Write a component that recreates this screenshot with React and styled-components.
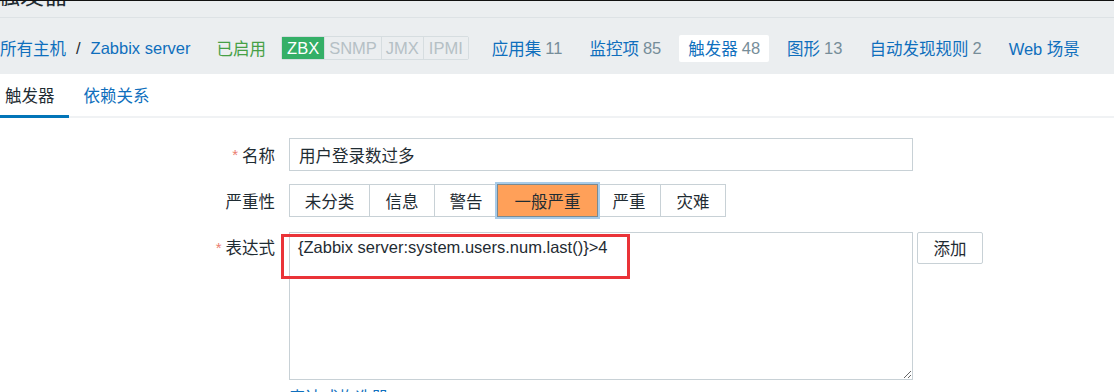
import React from "react";
import styled, { createGlobalStyle } from "styled-components";

const FONT = `"Liberation Sans", Arial, "Noto Sans CJK SC", sans-serif`;

const GlobalStyle = createGlobalStyle`
  html, body { margin: 0; padding: 0; background: #ffffff; }
  body {
    font-family: ${FONT};
    font-size: 16.5px;
    color: #1f2c33;
    overflow: hidden;
  }
`;

const Page = styled.div`
  width: 1114px;
  height: 392px;
  overflow: hidden;
  border-top: 1px solid #111;
  box-sizing: border-box;
`;

const TitleBar = styled.div`
  height: 16px;
  background: #ebeef0;
  overflow: hidden;
  border-bottom: 1px solid #dde2e5;
`;

const Title = styled.h1`
  margin: -17px 0 0 -4px;
  font-size: 24px;
  line-height: 24px;
  font-weight: normal;
  color: #1f2c33;
`;

const NavBar = styled.div`
  box-sizing: border-box;
  height: 56px;
  padding-top: 4px;
  background: #ebeef0;
  display: flex;
  align-items: center;
  white-space: nowrap;
`;

const Crumbs = styled.div`
  display: flex;
  align-items: center;
  color: #1f2c33;
`;

const Link = styled.a`
  color: #0f6fbd;
  text-decoration: none;
`;

const Sep = styled.span`
  margin: 0 10px;
  color: #1f2c33;
`;

const Status = styled.span`
  color: #46a046;
  margin-left: 26px;
`;

const Tags = styled.div`
  display: flex;
  margin-left: 15px;
  border: 1px solid #d6dde0;
  border-radius: 2px;
  height: 22px;
`;

const Tag = styled.span`
  display: flex;
  align-items: center;
  padding: 0 ${(p) => p.$pad || 4}px;
  background: ${(p) => (p.$on ? "#34af67" : "#ebeef0")};
  color: ${(p) => (p.$on ? "#ffffff" : "#b5c0c5")};
  border-left: ${(p) => (p.$first ? "none" : "1px solid #d6dde0")};
`;

const NavItem = styled.a`
  display: flex;
  align-items: center;
  height: 27px;
  padding: 0 9px;
  margin-left: ${(p) => p.$ml || 9}px;
  color: #0f6fbd;
  text-decoration: none;
  background: ${(p) => (p.$active ? "#ffffff" : "transparent")};
  border-radius: 2px;
`;

const Count = styled.span`
  color: #768d99;
  margin-left: 4px;
`;

const TabsBar = styled.div`
  display: flex;
  height: 42px;
  border-bottom: 2px solid #f0f2f4;
`;

const TabList = styled.div`
  display: flex;
  margin-left: -10px;
`;

const Tab = styled.a`
  display: flex;
  align-items: center;
  padding: 0 14px 0 15px;
  margin-bottom: -2px;
  text-decoration: none;
  color: ${(p) => (p.$active ? "#1f2c33" : "#0f6fbd")};
  border-bottom: 3px solid ${(p) => (p.$active ? "#0275b8" : "transparent")};
`;

const Form = styled.div`
  display: grid;
  grid-template-columns: 275px 1fr;
  column-gap: 14px;
  padding-top: 20px;
`;

const Label = styled.div`
  display: flex;
  align-items: center;
  justify-content: flex-end;
  height: ${(p) => p.$h || 33}px;
  margin-bottom: ${(p) => p.$mb || 0}px;
  color: #1f2c33;
`;

const Star = styled.span`
  color: #eb7e70;
  margin-right: 4px;
  font-size: 15px;
`;

const Field = styled.div`
  display: flex;
  align-items: flex-start;
  margin-bottom: ${(p) => p.$mb || 0}px;
`;

const TextInput = styled.div`
  box-sizing: border-box;
  width: 624px;
  height: 33px;
  border: 1px solid #c8d1d6;
  display: flex;
  align-items: center;
  padding: 0 9px;
  color: #1f2c33;
`;

const Segmented = styled.div`
  display: flex;
  height: 33px;
`;

const SegBtn = styled.span`
  box-sizing: border-box;
  display: flex;
  align-items: center;
  justify-content: center;
  width: ${(p) => p.$w}px;
  height: 33px;
  border: 1px solid ${(p) => (p.$on ? "#7a8a92" : "#c8d1d6")};
  margin-left: -1px;
  background: ${(p) => (p.$on ? "#ffa059" : "#ffffff")};
  color: #1f2c33;
  box-shadow: ${(p) => (p.$on ? "0 0 0 2px #a8cbe9" : "none")};
  position: relative;
  z-index: ${(p) => (p.$on ? 1 : 0)};
  &:first-child { margin-left: 0; }
`;

const AreaWrap = styled.div`
  position: relative;
`;

const ExprArea = styled.textarea`
  box-sizing: border-box;
  width: 624px;
  height: 148px;
  border: 1px solid #c8d1d6;
  padding: 4px 8px;
  margin: 0;
  font-family: ${FONT};
  font-size: 16.5px;
  line-height: 20px;
  color: #1f2c33;
  resize: both;
  outline: none;
  display: block;
`;

const Highlight = styled.div`
  position: absolute;
  left: -8px;
  top: 2px;
  width: 349px;
  height: 45px;
  box-sizing: border-box;
  border: 3px solid #ea3338;
  pointer-events: none;
`;

const Button = styled.button`
  box-sizing: border-box;
  margin-left: 4px;
  width: 66px;
  height: 32px;
  border: 1px solid #c8d1d6;
  border-radius: 2px;
  background: #ffffff;
  color: #1f2c33;
  font-family: ${FONT};
  font-size: 16.5px;
  padding: 0;
`;

const BuilderLink = styled.a`
  display: block;
  margin-top: 5px;
  color: #0f6fbd;
  text-decoration: none;
`;

const severities = [
  { t: "未分类", w: 81 },
  { t: "信息", w: 66 },
  { t: "警告", w: 64 },
  { t: "一般严重", w: 101, on: true },
  { t: "严重", w: 64 },
  { t: "灾难", w: 66 },
];

export default function App() {
  return (
    <>
      <GlobalStyle />
      <Page>
        <TitleBar>
          <Title>触发器</Title>
        </TitleBar>
        <NavBar>
          <Crumbs>
            <Link>所有主机</Link>
            <Sep>/</Sep>
            <Link>Zabbix server</Link>
          </Crumbs>
          <Status>已启用</Status>
          <Tags>
            <Tag $on $first $pad={5}>ZBX</Tag>
            <Tag $pad={4}>SNMP</Tag>
            <Tag $pad={4}>JMX</Tag>
            <Tag $pad={5}>IPMI</Tag>
          </Tags>
          <NavItem $ml={14}>应用集<Count>11</Count></NavItem>
          <NavItem>监控项<Count>85</Count></NavItem>
          <NavItem $active>触发器<Count>48</Count></NavItem>
          <NavItem>图形<Count>13</Count></NavItem>
          <NavItem>自动发现规则<Count>2</Count></NavItem>
          <NavItem>Web 场景</NavItem>
        </NavBar>
        <TabsBar>
          <TabList>
            <Tab $active>触发器</Tab>
            <Tab>依赖关系</Tab>
          </TabList>
        </TabsBar>
        <Form>
          <Label $mb={13}><Star>*</Star>名称</Label>
          <Field $mb={13}>
            <TextInput>用户登录数过多</TextInput>
          </Field>
          <Label $mb={15}>严重性</Label>
          <Field $mb={15}>
            <Segmented>
              {severities.map((s) => (
                <SegBtn key={s.t} $w={s.w} $on={s.on}>{s.t}</SegBtn>
              ))}
            </Segmented>
          </Field>
          <Label $h={30}><Star>*</Star>表达式</Label>
          <div>
            <Field>
              <AreaWrap>
                <ExprArea readOnly value={"{Zabbix server:system.users.num.last()}>4"} />
                <Highlight />
              </AreaWrap>
              <Button>添加</Button>
            </Field>
            <BuilderLink>表达式构造器</BuilderLink>
          </div>
        </Form>
      </Page>
    </>
  );
}
